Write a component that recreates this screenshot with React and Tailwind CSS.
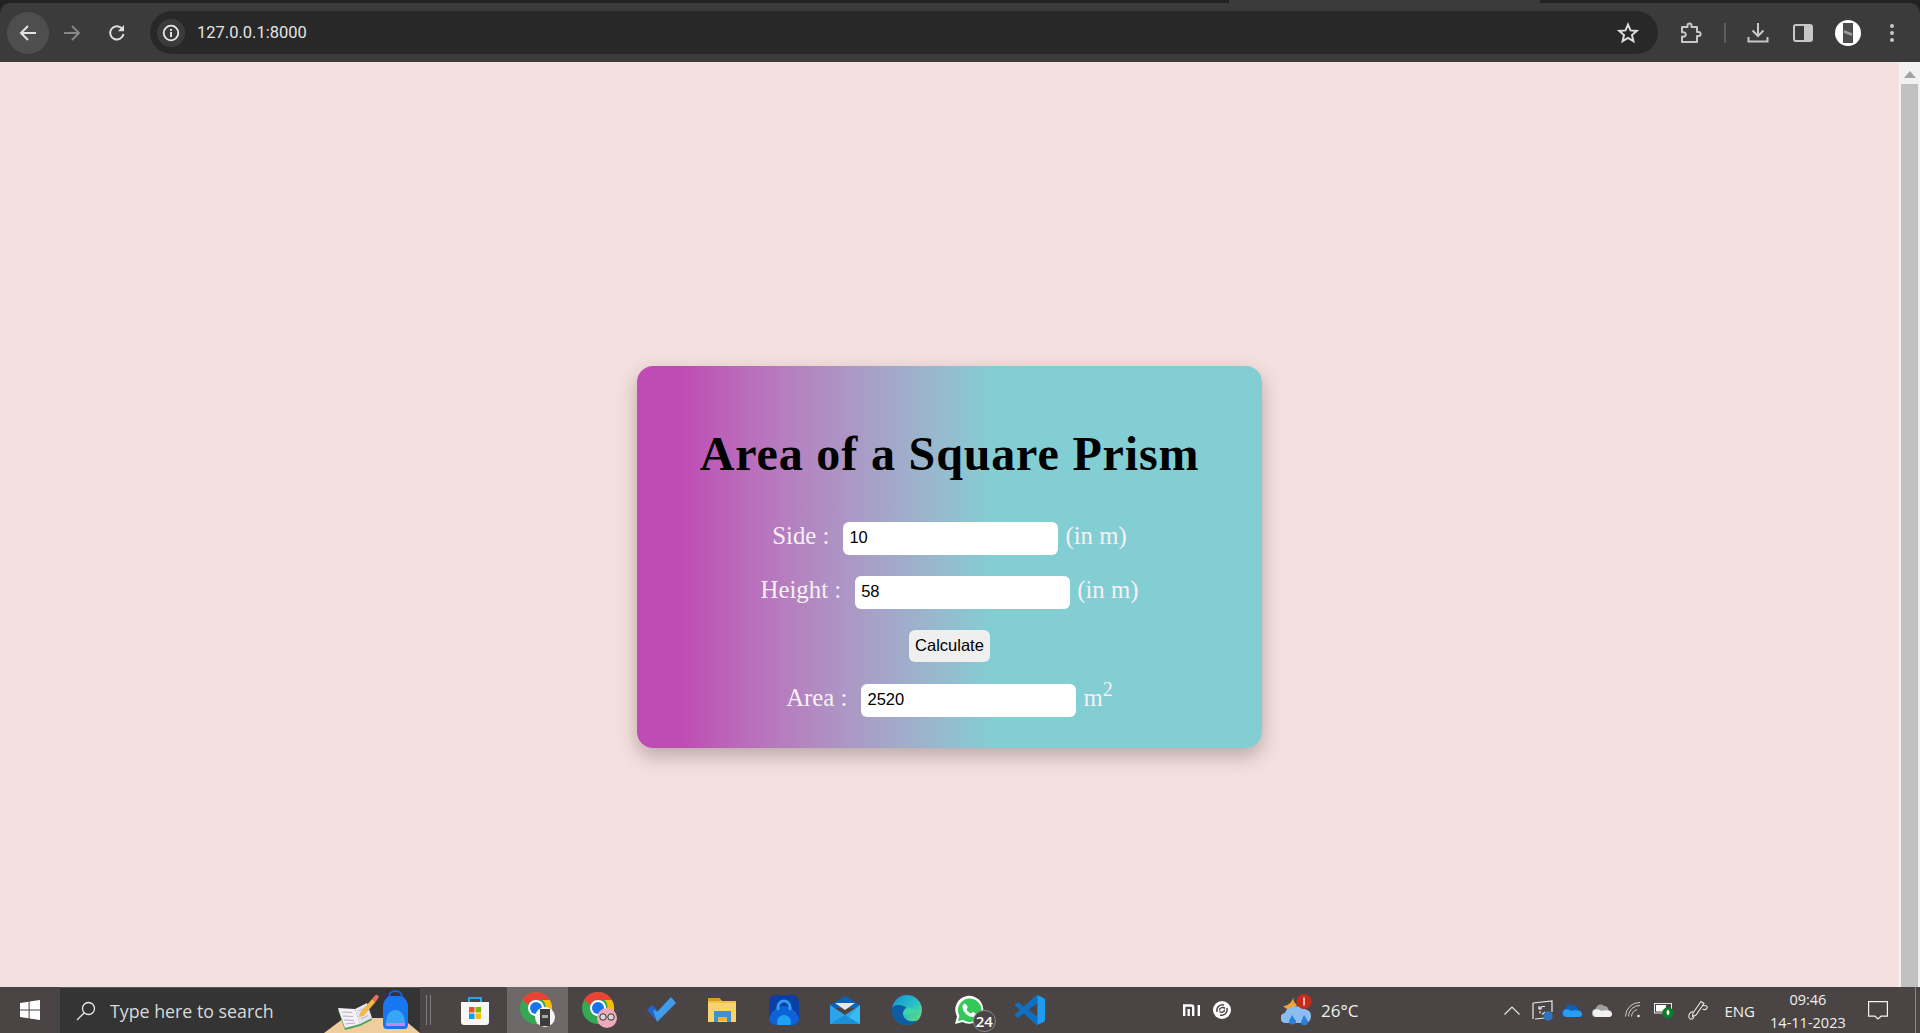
import React from "react";

const Back = () => (
  <svg width="20" height="20" viewBox="0 0 20 20" fill="none" stroke="#e3e3e3" strokeWidth="2"><path d="M18 10H3M10 3l-7 7 7 7" /></svg>
);
const Forward = () => (
  <svg width="20" height="20" viewBox="0 0 20 20" fill="none" stroke="#858585" strokeWidth="2"><path d="M2 10h15M10 3l7 7-7 7" /></svg>
);
const Reload = () => (
  <svg width="20" height="20" viewBox="0 0 20 20" fill="none"><path d="M16.5 11a6.7 6.7 0 1 1-1.6-5.6" stroke="#dcdcdc" strokeWidth="2" /><path d="M17 2v6.2h-6.2z" fill="#dcdcdc" /></svg>
);
const Info = () => (
  <svg width="18" height="18" viewBox="0 0 18 18" fill="none"><circle cx="9" cy="9" r="7.3" stroke="#e8e8e8" strokeWidth="1.8" /><rect x="8.1" y="8" width="1.9" height="5" fill="#e8e8e8" /><rect x="8.1" y="5" width="1.9" height="1.9" fill="#e8e8e8" /></svg>
);
const Star = () => (
  <svg width="22" height="22" viewBox="0 0 22 22" fill="none" stroke="#dcdcdc" strokeWidth="2"><path d="M11 2.6l2.5 5.8 6.2.5-4.7 4.1 1.4 6.1L11 15.9l-5.4 3.2L7 13 2.3 8.9l6.2-.5z" /></svg>
);
const Ext = () => (
  <svg width="22" height="22" viewBox="0 0 22 22" fill="none" stroke="#c7c7c7" strokeWidth="2" strokeLinejoin="round"><path d="M2 5h5.5V3.4a2 2 0 0 1 4 0V5H17v5h1.6a2 2 0 0 1 0 4H17v6H2v-5.5c3 .6 3.8-.8 3.8-2s-1-2.8-3.8-2.2z" /></svg>
);
const Download = () => (
  <svg width="22" height="22" viewBox="0 0 22 22" fill="none" stroke="#c7c7c7" strokeWidth="2"><path d="M11 1v12M5.5 8.5L11 14l5.5-5.5" /><path d="M1.5 15v4.5h19V15" /></svg>
);
const Side = () => (
  <svg width="20" height="20" viewBox="0 0 20 20"><rect x="1" y="2" width="18" height="16" rx="2" fill="none" stroke="#c7c7c7" strokeWidth="2" /><rect x="11" y="2" width="8" height="16" fill="#c7c7c7" /></svg>
);
const Avatar = () => (
  <svg width="26" height="26" viewBox="0 0 26 26"><circle cx="13" cy="13" r="13" fill="#fff" /><rect x="8" y="3" width="10" height="20" fill="#4d4d4d" /><path d="M9 10l8 3v3l-8-3z" fill="#9a9a9a" /></svg>
);
const Kebab = () => (
  <svg width="6" height="20" viewBox="0 0 6 20" fill="#c7c7c7"><circle cx="3" cy="3" r="2" /><circle cx="3" cy="10" r="2" /><circle cx="3" cy="17" r="2" /></svg>
);

const WinLogo = () => (
  <svg width="20" height="20" viewBox="0 0 20 20" fill="#fff"><path d="M0 3l8.6-1.3v7.7H0zM9.6 1.5L20 0v9.4H9.6zM0 10.4h8.6v7.8L0 17zM9.6 10.4H20V20L9.6 18.4z" /></svg>
);
const SearchIcon = () => (
  <svg width="20" height="20" viewBox="0 0 20 20" fill="none" stroke="#e8e8e8" strokeWidth="1.3"><circle cx="12.5" cy="7.5" r="6" /><path d="M8.2 11.8L1 19" /></svg>
);
const BookPack = () => (
  <svg width="96" height="46" viewBox="0 0 96 46">
    <path d="M0 46L20 31h58l18 15z" fill="#efcd9d" />
    <path d="M14 23l17 1 12-6 5 15-12 6-15 4z" fill="#4ca358" />
    <path d="M14 21l17 1 5 15-15 4z" fill="#f3f0f7" />
    <path d="M31 22l12-6 5 15-12 6z" fill="#e6e3f0" />
    <path d="M18 25l10 .5M19 29l10 .5M20 33l10 .5M21 37l10-1M35 24l7-3.500M36 28l7-3.500M37 32l7-3.500" stroke="#b5b1c6" strokeWidth="1" />
    <path d="M36 26l12-14 3.500 3L39.500 29 35 30z" fill="#f4b740" />
    <path d="M48 12l3-3.500c1-1 2-1 3 0s1 2 0 3l-2.500 3.500z" fill="#ef6c57" />
    <path d="M63 42c-3 0-4-2-4-5V20c0-7 5-11 7-11h11c2 0 7 4 7 11v17c0 3-1 5-4 5z" fill="#1877ee" />
    <path d="M65 10c0-8 13-8 13 0" fill="none" stroke="#1467d4" strokeWidth="2" />
    <path d="M62 36c0-8 4-13 9.500-13S81 28 81 36z" fill="#38a6f5" />
    <path d="M62 36h19v3H62z" fill="#b98bf0" />
  </svg>
);
const Store = () => (
  <svg width="30" height="30" viewBox="0 0 30 30">
    <path d="M9 8V3h12v5" fill="none" stroke="#25a8e0" strokeWidth="2" />
    <path d="M1 7h28v20a3 3 0 0 1-3 3H4a3 3 0 0 1-3-3z" fill="#f7f7f7" />
    <rect x="9" y="12" width="5.500" height="5.500" fill="#ef4f23" />
    <rect x="15.500" y="12" width="5.500" height="5.500" fill="#7db700" />
    <rect x="9" y="18.500" width="5.500" height="5.500" fill="#00a4ef" />
    <rect x="15.500" y="18.500" width="5.500" height="5.500" fill="#ffb900" />
  </svg>
);
const ChromeLogo = ({ badge }) => (
  <svg width="38" height="36" viewBox="-2 0 38 36">
    <circle cx="16" cy="16" r="16" fill="#34a853" />
    <path d="M16 0a16 16 0 0 1 13.900 8H16a8 8 0 0 0-7.500 5.200L2.100 8A16 16 0 0 1 16 0z" fill="#ea4335" />
    <path d="M29.900 8A16 16 0 0 1 16 32l7-12a8 8 0 0 0-.5-12z" fill="#fbbc04" />
    <circle cx="16" cy="16" r="8" fill="#fff" />
    <circle cx="16" cy="16" r="6" fill="#1a73e8" />
    {badge === "photo" && (
      <g>
        <circle cx="25" cy="25" r="10" fill="#f5f5f5" />
        <rect x="20" y="17" width="10" height="17" fill="#3c3c3c" />
        <rect x="22" y="23" width="6" height="3" fill="#a5a5a5" />
      </g>
    )}
    {badge === "glasses" && (
      <g>
        <circle cx="25" cy="26" r="10" fill="#efa9bd" />
        <circle cx="21" cy="25" r="3.200" fill="#d9d9d9" stroke="#333" strokeWidth="1" />
        <circle cx="29" cy="25" r="3.200" fill="#d9d9d9" stroke="#333" strokeWidth="1" />
      </g>
    )}
  </svg>
);
const Todo = () => (
  <svg width="30" height="26" viewBox="0 0 30 26">
    <path d="M1 13l5-5 9 9-5 6z" fill="#2564c9" />
    <path d="M7 14l4 12 19-19-5-6-14 15-2-2z" fill="#419be8" transform="translate(0 -1)" />
  </svg>
);
const Folder = () => (
  <svg width="28" height="26" viewBox="0 0 28 26">
    <path d="M0 1h11l3 3h14v21H0z" fill="#f2c04d" />
    <path d="M0 1h11l3 3H0z" fill="#dc9f1d" />
    <path d="M0 6h28v19H0z" fill="#f7d46e" />
    <path d="M6 14h17v11h-4v-5H10v5H6z" fill="#3b93d1" />
    <rect x="10" y="20" width="9" height="4" fill="#eab33c" />
  </svg>
);
const BlueLock = () => (
  <svg width="30" height="30" viewBox="0 0 30 30">
    <rect width="30" height="30" rx="7" fill="#0b3fa5" />
    <path d="M0 23C4 14 10 11 15 11s11 3 15 12v0a7 7 0 0 1-7 7H7a7 7 0 0 1-7-7z" fill="#0f62d6" />
    <path d="M9 15V12a6 6 0 0 1 12 0v3" fill="none" stroke="#2f9cf4" strokeWidth="3" />
    <circle cx="15" cy="27" r="7" fill="#1da1f5" />
  </svg>
);
const Mail = () => (
  <svg width="30" height="28" viewBox="0 0 30 28">
    <path d="M15 0l15 9v3H0V9z" fill="#0a63b8" />
    <path d="M5 7h20l-10 7z" fill="#e8e8e8" />
    <path d="M0 9l15 10L30 9v19H0z" fill="#2ba4ea" />
    <path d="M30 9v19H12z" fill="#3cc4f7" opacity=".7" />
    <path d="M0 28l15-9 15 9z" fill="#1c8fd9" />
  </svg>
);
const Edge = () => (
  <svg width="30" height="30" viewBox="0 0 30 30">
    <defs>
      <linearGradient id="eg" x1="0" y1="0" x2="1" y2="1">
        <stop offset="0" stopColor="#0f8fd8" />
        <stop offset=".55" stopColor="#2cc4c2" />
        <stop offset="1" stopColor="#7ee05a" />
      </linearGradient>
    </defs>
    <circle cx="15" cy="15" r="15" fill="url(#eg)" />
    <path d="M0 15c0 9 7 15 15 15 5 0 9-2 11-5-6 3-14 1-15-6 0-4 3-6 3-7C8 9 0 9 0 15z" fill="#0d5ca6" />
    <path d="M11 20c0-5 4-7 7-7 4 0 6 3 6 3s-1 3-6 3c-3 0-7 1-7 1z" fill="#3fd6a5" />
  </svg>
);
const WhatsApp = () => (
  <svg width="30" height="30" viewBox="0 0 30 30">
    <path d="M1 29l2-7.500A14 14 0 1 1 8.500 27z" fill="#fff" />
    <path d="M4 26l1.400-5A11.800 11.800 0 1 1 9 25z" fill="#34c759" />
    <path d="M11 8.500c-1 0-2.500 1.500-2.500 3.500 0 5 6 10 10 10 2 0 3.500-1.500 3.500-3 0-.6-2.800-2-3.200-2-.6 0-1.200 1.500-1.800 1.500-1 0-4.500-3-4.500-4.200 0-.7 1.200-1.200 1.200-1.800S12 8.500 11 8.500z" fill="#fff" />
  </svg>
);
const VSCode = () => (
  <svg width="30" height="30" viewBox="0 0 100 100">
    <path
      fillRule="evenodd"
      d="M70.900 99.300a6.200 6.200 0 0 0 5-.2l20.600-9.900a6.200 6.200 0 0 0 3.500-5.600V16.400a6.200 6.200 0 0 0-3.500-5.600L75.900.9a6.200 6.200 0 0 0-7.100 1.200L29.400 38 12.200 25a4.200 4.200 0 0 0-5.300.2L1.400 30.300a4.200 4.200 0 0 0 0 6.200L16.300 50 1.400 63.500a4.200 4.200 0 0 0 0 6.200l5.500 5a4.200 4.200 0 0 0 5.300.2L29.400 62l39.400 35.900c.6.600 1.300 1.100 2.100 1.400zM75 27.300L45.100 50 75 72.700z"
      fill="#0f6fc0"
    />
    <path d="M75 .6L96.500 10.800a6.200 6.200 0 0 1 3.500 5.600v67.200a6.200 6.200 0 0 1-3.500 5.600L75 99.500z" fill="#1f9cf0" />
  </svg>
);
const Mi = () => (
  <svg width="18" height="12" viewBox="0 0 18 12" fill="none" stroke="#fff" strokeWidth="2.400">
    <path d="M1.200 12V1.500h7a2 2 0 0 1 2 2V12M5.700 5v7M15.800 1v11" />
  </svg>
);
const Swirl = () => (
  <svg width="18" height="18" viewBox="0 0 18 18">
    <circle cx="9" cy="9" r="9" fill="#fff" />
    <path d="M4 11c-1-5 3-8 7-7M14 7c1 5-3 8-7 7M6.500 9.500c0-3 4-4 5.500-2M11.500 8.500c0 3-3.500 3.500-5 2" fill="none" stroke="#4a4444" strokeWidth="1.400" />
  </svg>
);
const Weather = () => (
  <svg width="32" height="32" viewBox="0 0 32 32">
    <path d="M13 1a9 9 0 0 0 3 10l-5 5c-3 0-6-1-9-4 6 0 10-5 11-11z" fill="#f0a53a" />
    <path d="M5 29a5 5 0 0 1-1-10c1-4 4-5 6-5 2-2 9-3 12 1 4 0 8 2 8 7s-3 7-6 7z" fill="#8cbdf2" />
    <path d="M11 21l4 6a3 3 0 0 1-7 0zM23 21l4 6.500a3.500 3.500 0 0 1-7 .5z" fill="#2a7fd6" />
    <circle cx="23" cy="7.500" r="7.500" fill="#c42b1c" />
    <rect x="22.200" y="3.500" width="1.600" height="8" fill="#f2d6d3" />
  </svg>
);
const Chevron = () => (
  <svg width="16" height="9" viewBox="0 0 16 9" fill="none" stroke="#e8e8e8" strokeWidth="1.200"><path d="M.5 8.500L8 1l7.500 7.500" /></svg>
);
const Sync = () => (
  <svg width="21" height="21" viewBox="0 0 21 21" fill="none">
    <path d="M1 3l19-2v11M3 19l10-1M1 3v16" stroke="#e8e8e8" strokeWidth="1.200" />
    <path d="M7 9l3-2.500h3M7 6v3h3M13 12l-3 2.500M8 11v2.500" stroke="#e8e8e8" strokeWidth="1.200" />
    <circle cx="16" cy="16" r="4.700" fill="#2f74c0" />
  </svg>
);
const Cloud = ({ top, bottom }) => (
  <svg width="20" height="13" viewBox="0 0 20 13">
    <path d="M4 13a4 4 0 0 1-.5-8C4.500 1 9-1 12 2c3 0 4.500 2 4.500 4 2 0 3.500 2 3.500 4s-1 3-3 3z" fill={top} />
    <path d="M4 13a4 4 0 0 1-1-7.500c3-.5 5 .500 6 1.500 2-1 8-1 8 0 2 0 3 2 3 3s-1 3-3 3z" fill={bottom} />
  </svg>
);
const Wifi = () => (
  <svg width="16" height="16" viewBox="0 0 16 16" fill="none" stroke="#cfcfcf" strokeWidth="1">
    <path d="M.5 14.500A14 14 0 0 1 15 .5M3.500 14.500A11 11 0 0 1 15 3.500M6.500 14.500A8 8 0 0 1 12 7.500" />
    <circle cx="13.500" cy="14" r="1.300" fill="#e8e8e8" stroke="none" />
  </svg>
);
const Battery = () => (
  <svg width="20" height="19" viewBox="0 0 20 19" fill="none">
    <rect x=".5" y="2.500" width="17" height="9.500" stroke="#e8e8e8" strokeWidth="1" />
    <rect x="2" y="4" width="10" height="6.500" fill="#fff" />
    <circle cx="14" cy="12" r="5.800" fill="#0e7a2b" />
    <path d="M14 8.500c2 2 2 4 0 6-2-2-2-4 0-6z" fill="#fff" />
  </svg>
);
const Pen = () => (
  <svg width="20" height="20" viewBox="0 0 20 20" fill="none" stroke="#e8e8e8" strokeWidth="1.100">
    <path d="M5 13L13 1.500l3 2L8 15l-3.500 1.500z" />
    <path d="M5 11.500C1.500 12 .5 15 1 17.500s4.500 2 5-1M14 5.500c3 0 6 0 5 2.500s-3.500 1.500-4.500 1" />
  </svg>
);
const Notif = () => (
  <svg width="20" height="19" viewBox="0 0 20 19" fill="none" stroke="#f2f2f2" strokeWidth="1.200"><path d="M.6.600h18.800v14.600h-6.400L10 18l-3-2.800H.6z" /></svg>
);

const tray = "flex items-center justify-center";
const slot = "flex w-[61.6px] h-full shrink-0 items-center justify-center";

function Field({ label, value, unit }) {
  return (
    <div className="flex h-[33px] items-center justify-center">
      <span className="mr-[14px] -mt-[5px]">{label}</span>
      <input
        readOnly
        value={value}
        className="h-[33px] w-[215px] rounded-[6px] bg-white pb-[2px] pl-[6px] font-['Liberation_Sans',Arial,sans-serif] text-[16.500px] text-black outline-none"
      />
      <span className="ml-[7px] -mt-[5px]">{unit}</span>
    </div>
  );
}

export default function App() {
  return (
    <div className="flex h-[1033px] w-[1920px] flex-col overflow-hidden bg-[#f4e0df]">
      {/* browser frame: dark strip behind the rounded toolbar */}
      <div className="shrink-0 bg-[#202322]">
        <div className="flex h-[3px] pl-[1229px]">
          <div className="h-full w-[311px] bg-[#3b3b3b]" />
        </div>
        <div className="flex h-[59px] items-center rounded-t-[10px] bg-[#3b3b3b]">
          <div className="ml-[7px] flex h-[42px] w-[42px] items-center justify-center rounded-full bg-[#4e4e4e]"><Back /></div>
          <div className="ml-[2px] flex h-[42px] w-[42px] items-center justify-center"><Forward /></div>
          <div className="ml-[3px] flex h-[42px] w-[42px] items-center justify-center"><Reload /></div>
          <div className="ml-[12px] flex h-[43px] w-[1508px] items-center rounded-full bg-[#282828] pl-[7px] pr-[19px]">
            <div className="flex h-[28px] w-[28px] items-center justify-center rounded-full bg-[#3b3b3b]"><Info /></div>
            <span className="ml-[12px] mt-[2px] font-['Roboto',Arial,sans-serif] text-[16.500px] text-[#e3e3e3]">127.0.0.1:8000</span>
            <div className="ml-auto"><Star /></div>
          </div>
          <div className="ml-[22px]"><Ext /></div>
          <div className="ml-[22px] h-[20px] w-[2px] bg-[#5c5c5c]" />
          <div className="ml-[21px]"><Download /></div>
          <div className="ml-[24px]"><Side /></div>
          <div className="ml-[22px]"><Avatar /></div>
          <div className="ml-[28px]"><Kebab /></div>
        </div>
      </div>

      {/* page + scrollbar */}
      <div className="flex min-h-0 flex-1">
        <main className="flex-1 pt-[304px]">
          <div className="mx-auto h-[382px] w-[625px] rounded-[16px] bg-linear-to-r from-[#bf4bb4] from-[7%] to-[#82ced3] to-[57%] pt-[60px] font-['Liberation_Serif','Times_New_Roman',serif] text-[24.800px] text-[#f6f1f4] shadow-[0_8px_20px_rgba(0,0,0,0.25)]">
            <h1 className="text-center text-[48px] font-bold leading-[55px] tracking-[0.850px] text-black">Area of a Square Prism</h1>
            <div className="mt-[41px] flex flex-col gap-[21px]">
              <Field label="Side :" value="10" unit="(in m)" />
              <Field label="Height :" value="58" unit="(in m)" />
              <div className="flex h-[33px] justify-center">
                <button className="h-[32px] w-[81px] rounded-[6px] bg-[#efefef] pb-[2px] font-['Liberation_Sans',Arial,sans-serif] text-[16.500px] text-black">Calculate</button>
              </div>
              <Field
                label="Area :"
                value="2520"
                unit={<span>m<sup className="text-[20px]">2</sup></span>}
              />
            </div>
          </div>
        </main>
        <div className="flex w-[21px] shrink-0 flex-col items-center bg-[#f1f1f1] pt-[9px]">
          <svg width="14" height="8" viewBox="0 0 14 8" fill="#a3a3a3"><path d="M7 0l6 7H1z" /></svg>
          <div className="mt-[5px] w-[17px] flex-1 bg-[#c1c1c1]" />
        </div>
      </div>

      {/* taskbar */}
      <footer className="flex h-[46px] shrink-0 items-center bg-[#4a4444] text-[#f0f0f0] font-['Open_Sans','Noto_Sans',sans-serif]">
        <div className="flex h-full w-[60px] items-center justify-center"><WinLogo /></div>
        <div className="relative flex h-full w-[360px] items-center overflow-hidden border-t border-[#5a5a5a] bg-[#343434] pl-[16px]">
          <SearchIcon />
          <span className="ml-[14px] mt-[2px] text-[17.800px] text-[#dadada]">Type here to search</span>
          <div className="ml-auto self-end"><BookPack /></div>
        </div>
        <div className="ml-[6px] flex h-[30px] gap-[3px]">
          <div className="w-px bg-[#7d7878]" />
          <div className="w-px bg-[#7d7878]" />
        </div>
        <div className="ml-[14px] flex h-full">
          <div className={slot}><div className="-ml-[2px]"><Store /></div></div>
          <div className={slot + " bg-[#6e6968]"}><ChromeLogo badge="photo" /></div>
          <div className={slot}><ChromeLogo badge="glasses" /></div>
          <div className={slot}><Todo /></div>
          <div className={slot}><Folder /></div>
          <div className={slot}><BlueLock /></div>
          <div className={slot}><Mail /></div>
          <div className={slot}><Edge /></div>
          <div className={slot + " relative"}>
            <WhatsApp />
            <span className="absolute left-[35px] top-[23px] flex h-[22px] w-[23px] items-center justify-center rounded-full border border-[#8a8a8a] bg-[#4a4444] text-[15px] font-semibold leading-none text-white">24</span>
          </div>
          <div className={slot}><VSCode /></div>
        </div>
        <div className="ml-[122px]"><Mi /></div>
        <div className="ml-[12px]"><Swirl /></div>
        <div className="ml-[50px]"><Weather /></div>
        <span className="ml-[8px] mt-[2px] text-[17px]">26°C</span>
        <div className={"ml-[146px] " + tray}><Chevron /></div>
        <div className={"ml-[12px] " + tray}><Sync /></div>
        <div className={"ml-[9px] " + tray}><Cloud top="#0a62b8" bottom="#2b9cf0" /></div>
        <div className={"ml-[10px] " + tray}><Cloud top="#a0a0a0" bottom="#f2f2f2" /></div>
        <div className={"ml-[13px] " + tray}><Wifi /></div>
        <div className={"ml-[13px] " + tray}><Battery /></div>
        <div className={"ml-[14px] " + tray}><Pen /></div>
        <span className="ml-[16px] mt-[2px] text-[15px]">ENG</span>
        <div className="ml-[15px] mt-[2px] flex w-[76px] flex-col items-center text-[14.500px] leading-[23px]">
          <span>09:46</span>
          <span>14-11-2023</span>
        </div>
        <div className={"ml-[22px] " + tray}><Notif /></div>
        <div className="ml-auto mr-[4px] h-full w-px bg-[#8a8686]" />
      </footer>
    </div>
  );
}
